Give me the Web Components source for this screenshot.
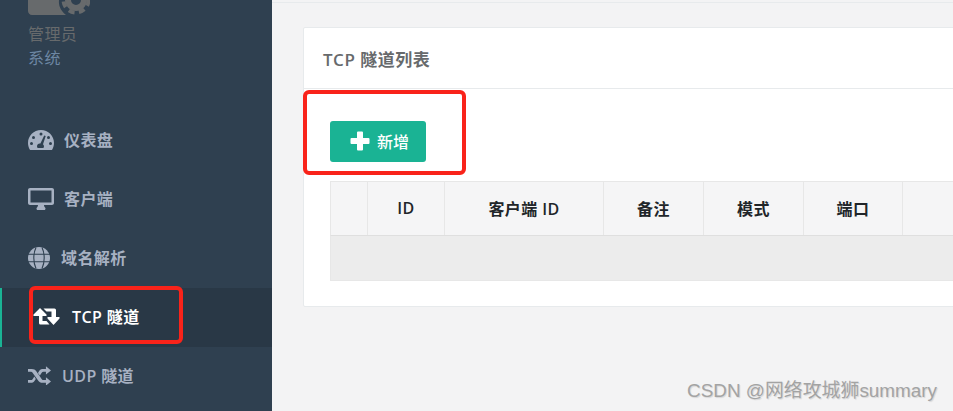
<!DOCTYPE html>
<html>
<head>
<meta charset="utf-8">
<title>TCP 隧道</title>
<style>
  html, body { margin: 0; height: 100%; overflow: hidden; }
  body { font-family: "Open Sans", "Noto Sans CJK SC", sans-serif; background: #f3f3f4; }
  app-shell { height: 411px; }
</style>
</head>
<body>
<app-shell>
  <side-bar slot="side">
    <nav-item label="仪表盘" gap="10">
      <svg viewBox="0 0 26 20" width="26" height="20"><path fill="currentColor" fill-rule="evenodd" d="M13 0C5.800 0 0 5.800 0 13c0 2.500.7 4.800 1.900 6.800.2.200.5.200.7.200h20.800c.3 0 .5 0 .7-.2C25.300 17.800 26 15.500 26 13 26 5.800 20.200 0 13 0zM13 2.500a1.500 1.500 0 1 1 0 3 1.500 1.500 0 0 1 0-3zM5.500 6a1.500 1.500 0 1 1 0 3 1.500 1.500 0 0 1 0-3zM20.500 6a1.500 1.500 0 1 1 0 3 1.500 1.500 0 0 1 0-3zM3.500 12a1.500 1.500 0 1 1 0 3 1.500 1.500 0 0 1 0-3zM22.500 12a1.500 1.500 0 1 1 0 3 1.500 1.500 0 0 1 0-3zM16.200 5.500l1.500.5-2.700 8.300c.6.500 1 1.200 1 2 0 .7-.3 1.300-.7 1.700h-5.600c-.4-.4-.7-1-.7-1.700 0-1.500 1.200-2.700 2.700-2.700h.7z"/></svg>
    </nav-item>
    <nav-item label="客户端" gap="10">
      <svg viewBox="0 0 26 22" width="26" height="22"><path fill="currentColor" fill-rule="evenodd" d="M2 0h22c1.100 0 2 .9 2 2v13c0 1.100-.9 2-2 2h-8c0 1 .5 2 1 2.500.4.400.5.700.5 1 0 .8-.4 1.500-1 1.500H9.500c-.6 0-1-.7-1-1.500 0-.3.100-.6.500-1 .5-.5 1-1.500 1-2.500H2c-1.100 0-2-.9-2-2V2C0 .9.900 0 2 0zM2.500 2.500v12h21v-12z"/></svg>
    </nav-item>
    <nav-item label="域名解析" gap="11">
      <svg viewBox="0 0 22 22" width="22" height="22"><circle cx="11" cy="11" r="11" fill="currentColor"/><path fill="none" stroke="#2f4050" stroke-width="1.100" d="M0 7.200h22M0 14.800h22M8 .5C6.300 4 5.800 7.500 5.800 11S6.300 18 8 21.500M14 .5c1.700 3.500 2.200 7 2.200 10.500S15.700 18 14 21.500"/></svg>
    </nav-item>
    <nav-item label="TCP 隧道" gap="12" active>
      <svg viewBox="0 0 27 17" width="27" height="17"><path fill="currentColor" d="M7 0l6.500 6.500V8H9.500v5h4l3 3.500h-9A1.500 1.500 0 0 1 6 15V8H.5V6.500zM10.500.5h11A1.500 1.500 0 0 1 23 2v7h3.500v1.500L20.500 17l-6-6.500V9h4V3.500h-5z"/></svg>
    </nav-item>
    <nav-item label="UDP 隧道" gap="11">
      <svg viewBox="0 0 25 20" width="23" height="19"><path fill="currentColor" d="M19.500 0l5.500 4.500-5.500 4.500V6h-2.800c-.8 0-1.300.4-1.800 1l-2 2.900L10.800 7.200l1.700-2.500C13.500 3.300 15 3 16.500 3h3zM0 3h4c2.500 0 3.800.8 5 2.500l6 8.500c.5.700 1 1 1.700 1h2.800v-3l5.500 4.500-5.500 4.500v-3h-3.500c-2.500 0-3.800-.9-5-2.600l-6-8.400C4.500 6.300 4 6 3.300 6H0zM0 15h3.300c.7 0 1.200-.3 1.700-1l1.900-2.800 1.600 2.600-1.500 2.300C5.800 17.700 4.500 18 3.500 18H0z"/></svg>
    </nav-item>
  </side-bar>
  <tunnel-card title-text="TCP 隧道列表">
    <add-button>新增</add-button>
    <data-table></data-table>
  </tunnel-card>
</app-shell>
<mark-box style="left:303px;top:90px;width:163px;height:85px"></mark-box>
<mark-box style="left:29px;top:286px;width:154px;height:58px"></mark-box>
<water-mark>CSDN @网络攻城狮summary</water-mark>

<script>
function define(name, html, init) {
  const template = document.createElement('template');
  template.innerHTML = html;
  customElements.define(name, class extends HTMLElement {
    constructor() {
      super();
      this.attachShadow({ mode: 'open' });
      this.shadowRoot.appendChild(template.content.cloneNode(true));
    }
    connectedCallback() {
      if (init) init(this, this.shadowRoot);
    }
  });
}

define('app-shell', `
<style>
  :host { display: flex; width: 100%; overflow: hidden; }
  .side { flex: 0 0 272px; }
  .main { flex: 1; min-width: 0; padding: 2px 0 0 0; }
  .rule { height: 1px; background: #e7eaec; margin-bottom: 24px; }
  .wrap { padding-left: 31px; margin-right: -200px; }
</style>
<div class="side"><slot name="side"></slot></div>
<div class="main">
  <div class="rule"></div>
  <div class="wrap"><slot></slot></div>
</div>`);

define('side-bar', `
<style>
  :host { display: block; height: 411px; background: #2f4050; overflow: hidden; }
  .head { height: 111px; padding-left: 28px; box-sizing: border-box; }
  svg { display: block; }
  .role { margin-top: 9px; font-size: 16px; letter-spacing: .4px; line-height: 20px; color: #676a6c; }
  .sys { margin-top: 4px; font-size: 16px; letter-spacing: .4px; line-height: 20px; color: #6d87a3; }
</style>
<div class="head">
  <svg width="62" height="15" viewBox="0 0 62 15">
    <path fill="#676a6c" d="M0 0h31c-.5 5 1 10 7 15H4c-2.200 0-4-1.800-4-4z"/>
    <circle cx="48" cy="0" r="8" fill="none" stroke="#676a6c" stroke-width="6"/>
    <circle cx="48" cy="0" r="12.500" fill="none" stroke="#676a6c" stroke-width="4" stroke-dasharray="6 4.500"/>
  </svg>
  <div class="role">管理员</div>
  <div class="sys">系统</div>
</div>
<slot></slot>`);

define('nav-item', `
<style>
  :host { display: block; }
  .row { height: 59px; box-sizing: border-box; display: flex; align-items: center; padding: 0 0 2px 28px;
    color: #a7b1c2; font-size: 16px; letter-spacing: .4px; font-weight: 600; }
  :host([active]) .row { background: #293846; color: #fff; border-left: 2px solid #1ab394; padding-left: 31px; }
  .icon { display: flex; }
  span { margin-bottom: 2px; }
</style>
<div class="row"><div class="icon"><slot></slot></div><span></span></div>`,
(el, root) => {
  const label = root.querySelector('span');
  label.textContent = el.getAttribute('label');
  label.style.marginLeft = el.getAttribute('gap') + 'px';
});

define('tunnel-card', `
<style>
  :host { display: block; background: #fff; border: 1px solid #e7eaec; border-radius: 2px; height: 280px; box-sizing: border-box; }
  .title { height: 61px; box-sizing: border-box; border-bottom: 1px solid #e7eaec; padding-left: 19px;
    display: flex; align-items: center; font-size: 17px; letter-spacing: .5px; font-weight: 600; color: #676a6c; }
  .body { padding: 32px 0 0 26px; }
</style>
<div class="title"></div>
<div class="body"><slot></slot></div>`,
(el, root) => { root.querySelector('.title').textContent = el.getAttribute('title-text'); });

define('add-button', `
<style>
  :host { display: inline-flex; align-items: center; width: 96px; height: 41px; box-sizing: border-box; padding: 0 0 1px 20px;
    background: #1ab394; border-radius: 3px; color: #fff; font-size: 16px; font-weight: 500; margin-bottom: 19px; vertical-align: top; }
  svg { margin-right: 7px; }
</style>
<svg width="20" height="20" viewBox="0 0 20 20"><path fill="#fff" d="M8 0.500h4a1 1 0 0 1 1 1V7h5.500a1 1 0 0 1 1 1v4a1 1 0 0 1-1 1H13v5.500a1 1 0 0 1-1 1H8a1 1 0 0 1-1-1V13H1.500a1 1 0 0 1-1-1V8a1 1 0 0 1 1-1H7V1.500a1 1 0 0 1 1-1z"/></svg>
<slot></slot>`);

define('data-table', `
<style>
  :host { display: block; width: 820px; }
  .head { display: grid; grid-template-columns: 37px 77px 159px 100px 100px 99px 1fr; height: 55px; box-sizing: border-box;
    background: #f5f5f6; border: 1px solid #e7e7e7; border-bottom-color: #dfdfdf; border-right: 0; }
  .head div { display: flex; align-items: center; justify-content: center; border-right: 1px solid #e7e7e7; padding-bottom: 2px;
    font-size: 16px; letter-spacing: .4px; font-weight: 600; color: #212529; }
  .empty { height: 45px; box-sizing: border-box; background: #ececec; border: 1px solid #e7e7e7; border-top: 0; }
</style>
<div class="head"><div></div><div>ID</div><div>客户端 ID</div><div>备注</div><div>模式</div><div>端口</div><div></div></div>
<div class="empty"></div>`);

define('mark-box', `
<style>
  :host { display: block; position: absolute; box-sizing: border-box; border: 4px solid #f9231a; border-radius: 6px; }
</style>`);

define('water-mark', `
<style>
  :host { display: block; position: absolute; left: 687px; top: 379px; font-family: "Liberation Sans", "Noto Sans CJK SC", sans-serif;
    font-size: 18.900px; line-height: 24px; color: #a3a3a3; text-shadow: 1px 1px 1px rgba(0,0,0,.12); white-space: nowrap; }
</style>
<slot></slot>`);
</script>
</body>
</html>
